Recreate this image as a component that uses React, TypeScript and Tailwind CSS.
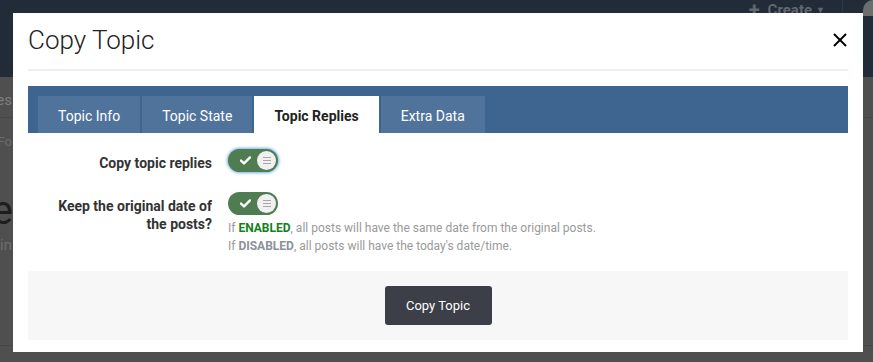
import { ReactNode } from 'react'

function Toggle({ focused }: { focused?: boolean }) {
    return (
        <div
            className={`flex h-[23px] w-[50px] shrink-0 items-center justify-between rounded-full bg-[#4f7d51] pl-[12px] pr-[2px] ${focused ? 'shadow-[0_0_3px_1px_rgba(90,160,230,0.85)]' : ''}`}
        >
            <svg width="11" height="9" viewBox="0 0 11 9" fill="none">
                <path d="M1 4.6 L4 7.4 L10 1.4" stroke="#ffffff" strokeWidth="2.4" strokeLinecap="round" strokeLinejoin="round" />
            </svg>
            <div className="flex h-[19px] w-[19px] flex-col items-center justify-center gap-[2px] rounded-full bg-[#f0f0f0]">
                <span className="h-px w-[8px] bg-[#a8a8a8]" />
                <span className="h-px w-[8px] bg-[#a8a8a8]" />
                <span className="h-px w-[8px] bg-[#a8a8a8]" />
            </div>
        </div>
    )
}

function Row({ label, children }: { label: ReactNode; children: ReactNode }) {
    return (
        <div className="flex items-start">
            <div className="ml-[14px] w-[170px] pt-[5px] text-right text-[14px] font-bold leading-[18px] text-[#333]">
                {label}
            </div>
            <div className="ml-[16px]">{children}</div>
        </div>
    )
}

const tabs = ['Topic Info', 'Topic State', 'Topic Replies', 'Extra Data']

export default function App() {
    return (
        <div className="relative h-[362px] w-[873px] overflow-hidden bg-[#4f4f4f] font-['Roboto','Liberation_Sans',sans-serif]">
            {/* dimmed page behind the modal */}
            <div className="flex h-[77px] items-start justify-end bg-[#222b38]">
                <div className="mt-[2px] flex items-center gap-[8px] font-bold text-[#606771]">
                    <span className="text-[20px] leading-[16px]">+</span>
                    <span className="text-[15px] leading-[16px]">Create</span>
                    <span className="-ml-[4px] text-[9px] leading-[16px]">▼</span>
                </div>
                <div className="ml-[17px] h-[40px] w-px bg-[#2c3645]" />
                <div className="ml-[20px] h-[16px] w-[10px] rounded-tl-full bg-[#6d6d6d]" />
            </div>
            <div className="flex h-[41px] items-center border-b border-[#464646]">
                <div className="mt-[6px] flex w-[12px] justify-end overflow-hidden whitespace-nowrap text-[15px] text-[#7e7e7e]">Categories</div>
            </div>
            <div className="flex h-[46px] items-center">
                <div className="mt-[2px] flex w-[12px] justify-end overflow-hidden whitespace-nowrap text-[13px] text-[#6c6c6c]">Fo</div>
            </div>
            <div className="flex h-[67px] items-end">
                <div className="flex w-[13px] justify-end overflow-hidden whitespace-nowrap text-[40px] leading-[40px] text-[#1d1d1d]">Title</div>
            </div>
            <div className="flex h-[22px] items-center">
                <div className="mt-[6px] flex w-[12px] justify-end overflow-hidden whitespace-nowrap text-[15px] text-[#6e6e6e]">in</div>
            </div>
            <div className="mt-[92px] h-px bg-[#454545]" />

            {/* modal */}
            <div className="absolute left-[13px] top-[13px] flex h-[339px] w-[850px] flex-col bg-white px-[15px]">
                <div className="flex items-start justify-between border-b-2 border-[#eeeeee] pb-[13px] pt-[11px]">
                    <h1 className="text-[26px] font-light leading-[32px] text-[#222]">Copy Topic</h1>
                    <svg className="mr-[1px] mt-[9px]" width="14" height="14" viewBox="0 0 14 14">
                        <path d="M1 1 L13 13 M13 1 L1 13" stroke="#000" strokeWidth="2" />
                    </svg>
                </div>

                <div className="mt-[15px] flex h-[47px] items-end gap-[2px] bg-[#3d6590] pl-[10px]">
                    {tabs.map((t) => (
                        <div
                            key={t}
                            className={`flex h-[37px] items-center px-[20px] pt-[3px] text-[14px] ${t === 'Topic Replies' ? 'bg-white font-bold text-[#222]' : 'bg-[#50739c] text-white'}`}
                        >
                            {t}
                        </div>
                    ))}
                </div>

                <div className="mt-[16px] flex flex-col gap-[20px]">
                    <Row label="Copy topic replies">
                        <Toggle focused />
                    </Row>
                    <Row label="Keep the original date of the posts?">
                        <Toggle />
                        <div className="mt-[4px] text-[12px] leading-[18px] text-[#9a9a9a]">
                            <div>
                                If <b className="text-[#14801a]">ENABLED</b>, all posts will have the same date from the original posts.
                            </div>
                            <div>
                                If <b className="text-[#8b919b]">DISABLED</b>, all posts will have the today's date/time.
                            </div>
                        </div>
                    </Row>
                </div>

                <div className="mt-[16px] flex h-[69px] items-center justify-center bg-[#f7f7f7]">
                    <button className="h-[39px] w-[107px] rounded-[3px] bg-[#3c3f47] text-[13px] text-white">Copy Topic</button>
                </div>
            </div>
        </div>
    )
}
